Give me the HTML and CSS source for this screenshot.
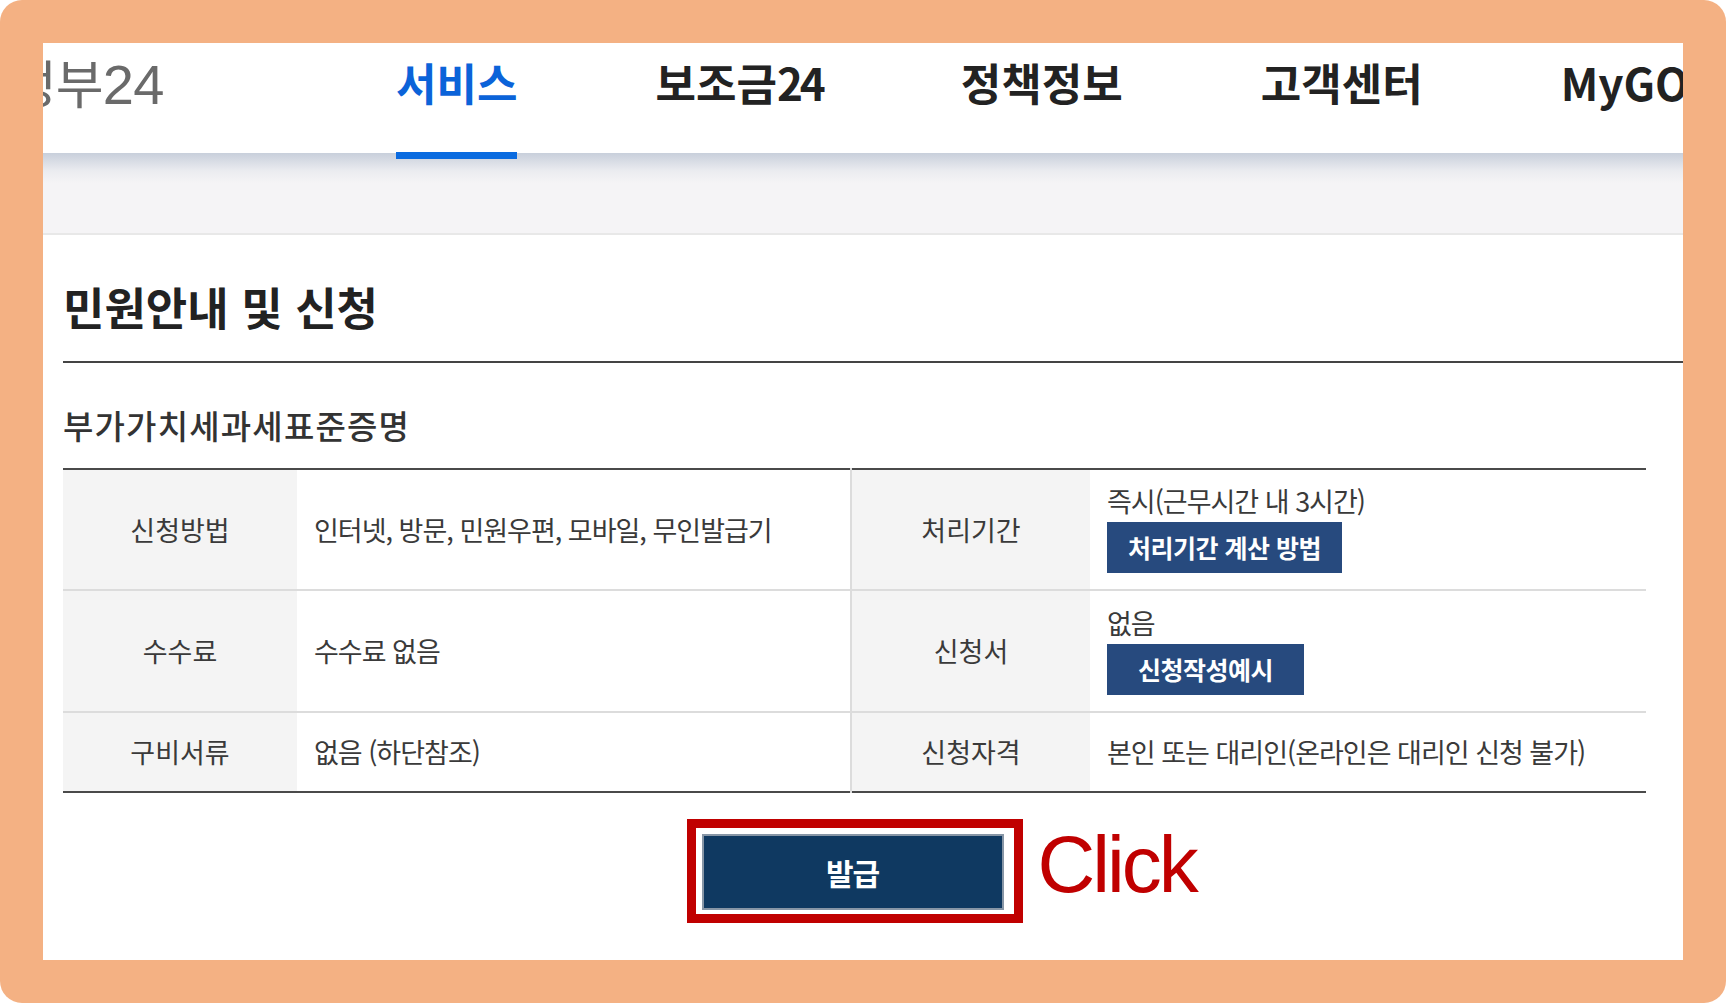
FILE: index.html
```html
<!DOCTYPE html>
<html lang="ko">
<head>
    <meta charset="UTF-8">
    <meta name="viewport" content="width=device-width, initial-scale=1.0">
    <title>민원안내 및 신청 - 부가가치세과세표준증명</title>
    <link rel="stylesheet" href="styles.css">
</head>
<body>
    <div class="frame">
        <div class="shot">
            <header class="gnb">
                <div class="logo">정부<span class="logo-num">24</span></div>
                <nav class="menu">
                    <a class="menu-item active">서비스</a>
                    <a class="menu-item">보조금<span class="num">24</span></a>
                    <a class="menu-item">정책정보</a>
                    <a class="menu-item">고객센터</a>
                    <a class="menu-item">MyGOV</a>
                </nav>
            </header>
            <div class="sub-band"></div>

            <main class="content">
                <h2 class="page-title">민원안내 및 신청</h2>
                <h3 class="doc-title">부가가치세과세표준증명</h3>

                <table class="info-table">
                    <colgroup>
                        <col class="col-th">
                        <col class="col-td">
                        <col class="col-th2">
                        <col class="col-td2">
                    </colgroup>
                    <tr class="row-tall">
                        <th>신청방법</th>
                        <td>인터넷, 방문, 민원우편, 모바일, 무인발급기</td>
                        <th class="th-split">처리기간</th>
                        <td>
                            <span class="cell-text">즉시(근무시간 내 3시간)</span>
                            <a class="btn-navy">처리기간 계산 방법</a>
                        </td>
                    </tr>
                    <tr class="row-tall2">
                        <th>수수료</th>
                        <td>수수료 없음</td>
                        <th class="th-split">신청서</th>
                        <td>
                            <span class="cell-text">없음</span>
                            <a class="btn-navy btn-wide">신청작성예시</a>
                        </td>
                    </tr>
                    <tr class="row-short">
                        <th>구비서류</th>
                        <td>없음 (하단참조)</td>
                        <th class="th-split">신청자격</th>
                        <td>본인 또는 대리인(온라인은 대리인 신청 불가)</td>
                    </tr>
                </table>

                <div class="issue-area">
                    <div class="highlight">
                        <button class="btn-issue">발급</button>
                        <span class="click-note">Click</span>
                    </div>
                </div>
            </main>
        </div>
    </div>
</body>
</html>
```

FILE: styles.css
```css
body {
    margin: 0;
    background: #fff;
    font-family: "Noto Sans CJK KR", "Noto Sans", sans-serif;
    color: #333;
}
.frame {
    height: 1003px;
    box-sizing: border-box;
    padding: 43px;
    background: #f4b183;
    border-radius: 22px;
}
.shot {
    height: 100%;
    background: #fff;
    overflow: hidden;
}

/* 상단 메뉴 */
.gnb {
    display: flex;
    align-items: flex-start;
    height: 110px;
    box-sizing: border-box;
    padding-top: 9px;
    white-space: nowrap;
}
.logo {
    flex: none;
    width: 387px;
    margin-left: -34px;
    font-size: 52px;
    line-height: 60px;
    letter-spacing: -1px;
    color: #6a6a6a;
}
.logo-num {
    font-family: "Liberation Sans", Arial, sans-serif;
    font-size: 56px;
    letter-spacing: -0.5px;
}
.menu {
    display: flex;
    gap: 138px;
}
.menu-item {
    position: relative;
    flex: none;
    font-size: 44px;
    font-weight: 700;
    line-height: 60px;
    letter-spacing: 0;
    color: #222;
}
.menu-item .num {
    letter-spacing: -3px;
}
.menu-item.active {
    color: #0b63d9;
}
.menu-item.active::after {
    content: "";
    position: absolute;
    left: 0;
    right: 0;
    bottom: -47px;
    height: 7px;
    background: #0a6be0;
}
.sub-band {
    height: 80px;
    background: linear-gradient(#c8cfdb, #ebecf0 18px, #f5f4f6 30px);
    border-bottom: 2px solid #e8e8e8;
}

/* 본문 */
.content {
    padding: 44px 0 0 20px;
}
.page-title {
    margin: 0;
    padding-bottom: 26px;
    font-size: 45px;
    font-weight: 700;
    line-height: 56px;
    letter-spacing: 0;
    color: #222;
    border-bottom: 2px solid #444;
}
.doc-title {
    margin: 42px 0 23px;
    font-size: 33px;
    font-weight: 500;
    line-height: 40px;
    letter-spacing: 1.2px;
    color: #333;
}
.info-table {
    width: 1583px;
    table-layout: fixed;
    border-collapse: collapse;
    border-top: 2px solid #4a4a4a;
    border-bottom: 2px solid #4a4a4a;
    font-size: 27px;
    line-height: 30px;
    letter-spacing: -1px;
    color: #3a3a3a;
}
.col-th { width: 234px; }
.col-td { width: 554px; }
.col-th2 { width: 239px; }
.col-td2 { width: 556px; }
.info-table tr + tr {
    border-top: 2px solid #dcdcdc;
}
.row-tall { height: 121px; }
.row-tall2 { height: 122px; }
.row-short { height: 80px; }
.info-table th {
    background: #f4f4f4;
    font-weight: 400;
    letter-spacing: 0;
    text-align: center;
    vertical-align: middle;
}
.info-table th.th-split {
    border-left: 2px solid #dcdcdc;
}
.info-table td {
    padding: 0 17px;
    vertical-align: middle;
    text-align: left;
}
.cell-text {
    display: block;
}
.btn-navy {
    display: inline-block;
    margin-top: 6px;
    height: 51px;
    line-height: 51px;
    padding: 0 21px;
    background: #274a7e;
    color: #fff;
    font-size: 25px;
    font-weight: 700;
    letter-spacing: -0.5px;
}
.btn-navy.btn-wide {
    padding: 0 31px;
}

/* 발급 버튼 */
.issue-area {
    width: 1583px;
    margin-top: 26px;
    display: flex;
    justify-content: center;
}
.highlight {
    position: relative;
    border: 9px solid #c00000;
    padding: 6px 10px 4px 6px;
}
.btn-issue {
    display: block;
    width: 302px;
    height: 76px;
    background: #0f3961;
    border: 2px solid #8796a6;
    color: #fff;
    font-family: "Noto Sans CJK KR", sans-serif;
    font-size: 30px;
    font-weight: 700;
    letter-spacing: -1px;
}
.click-note {
    position: absolute;
    left: calc(100% + 24px);
    top: -3px;
    font-family: "Liberation Sans", Arial, sans-serif;
    font-size: 80px;
    line-height: 80px;
    letter-spacing: -3px;
    color: #c00000;
    white-space: nowrap;
}
```
